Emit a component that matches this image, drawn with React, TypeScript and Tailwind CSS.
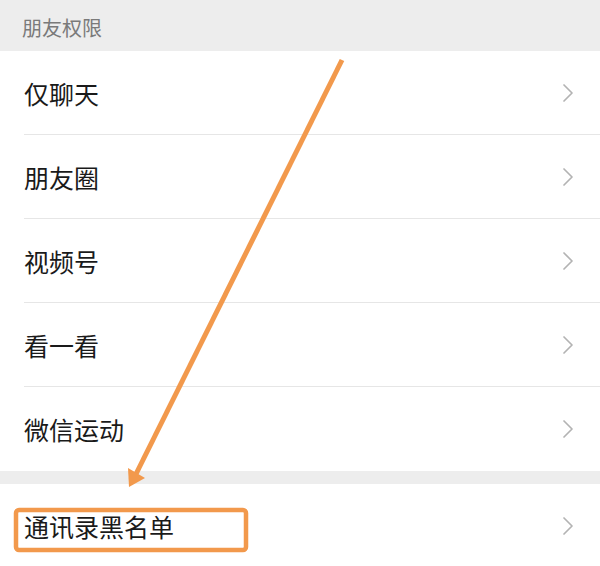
import React from "react";

const Chevron = () => (
  <svg width="12" height="20" viewBox="0 0 12 20" className="shrink-0">
    <path d="M2 2 L10 10 L2 18" fill="none" stroke="#b3b3b3" strokeWidth="1.7" strokeLinecap="round" strokeLinejoin="round" />
  </svg>
);

const Row = ({ label, divider }: { label: string; divider: boolean }) => (
  <div className="relative flex h-[84px] items-center bg-white pl-[24px] pr-[26px]">
    <span className="flex-1 text-[25px] leading-none text-[#1a1a1a]">{label}</span>
    <Chevron />
    {divider && <div className="absolute bottom-0 left-[24px] right-0 h-px bg-[#e6e6e6]" />}
  </div>
);

export default function App() {
  const items = ["仅聊天", "朋友圈", "视频号", "看一看", "微信运动"];
  return (
    <div
      className="relative h-[566px] w-[600px] overflow-hidden bg-[#ededed]"
      style={{ fontFamily: '"Noto Sans CJK SC", "Noto Sans", sans-serif' }}
    >
      <div className="flex h-[51px] items-center pl-[22px] pt-[4px] text-[20px] leading-none text-[#7a7a7a]">朋友权限</div>
      {items.map((t, i) => (
        <Row key={t} label={t} divider={i < items.length - 1} />
      ))}
      <div className="h-[13px]" />
      <Row label="通讯录黑名单" divider={false} />
      <svg className="pointer-events-none absolute left-0 top-0" width="600" height="566" viewBox="0 0 600 566">
        <line x1="342" y1="60" x2="136" y2="474" stroke="#f2994c" strokeWidth="5" />
        <polygon points="129,487 128,468 145,478" fill="#f2994c" />
        <rect x="16" y="510" width="230" height="40" rx="3" fill="none" stroke="#f2994c" strokeWidth="4.5" />
      </svg>
    </div>
  );
}
